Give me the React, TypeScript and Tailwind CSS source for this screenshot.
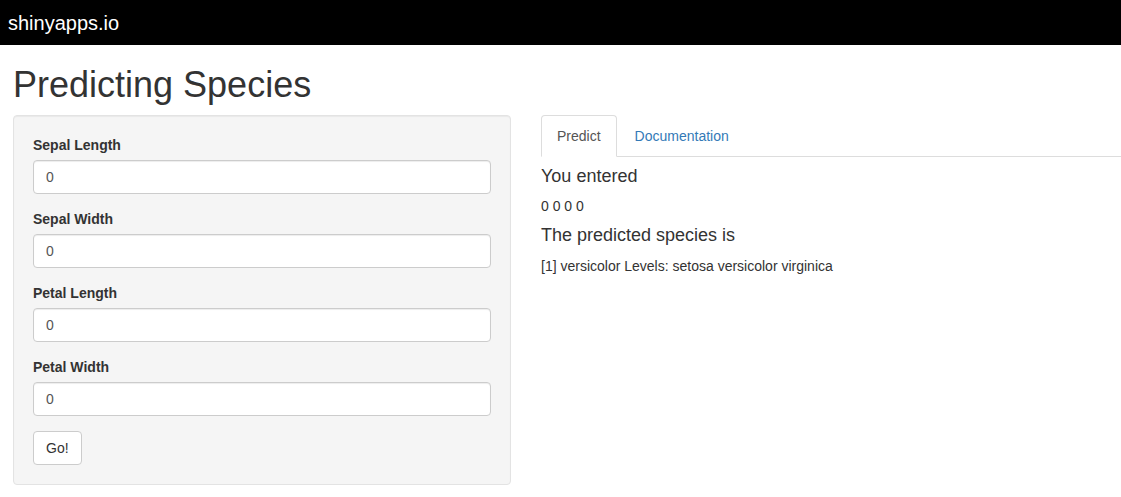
import React from "react";

const fields = ["Sepal Length", "Sepal Width", "Petal Length", "Petal Width"];

const Field = ({ label }: { label: string }) => (
    <div className="mb-[15px]">
        <label className="block mb-[5px] font-bold leading-[20px]">{label}</label>
        <input
            type="number"
            defaultValue={0}
            className="block w-full h-[34px] px-3 py-[6px] border border-[#ccc] rounded bg-white text-[#555] text-[14px] leading-[20px] shadow-[inset_0_1px_1px_rgba(0,0,0,0.075)] outline-none [appearance:textfield] [&::-webkit-inner-spin-button]:appearance-none"
        />
    </div>
);

const App = () => {
    const [tab, setTab] = React.useState("predict");
    return (
        <div className="min-h-[497px] bg-white text-[#333] text-[14px] leading-[20px] font-['Liberation_Sans',Arial,sans-serif]">
            <div className="h-[45px] bg-black flex items-center pl-2 text-white text-[20px] leading-normal">
                shinyapps.io
            </div>

            <h1 className="mt-5 mb-[10px] pl-[13px] text-[36px] leading-[1.1] font-medium">Predicting Species</h1>

            <div className="flex">
                <div className="ml-[13px] w-[498px] shrink-0 p-[19px] bg-[#f5f5f5] border border-[#e3e3e3] rounded shadow-[inset_0_1px_1px_rgba(0,0,0,0.05)]">
                    {fields.map((f) => (
                        <Field key={f} label={f} />
                    ))}
                    <button className="h-[34px] px-3 py-[6px] bg-white border border-[#ccc] rounded text-[#333] leading-[20px]">
                        Go!
                    </button>
                </div>

                <div className="flex-1 min-w-0 ml-[30px]">
                    <ul className="flex border-b border-[#ddd]">
                        <li className="-mb-px mr-[2px]">
                            <button
                                onClick={() => setTab("predict")}
                                className={
                                    tab === "predict"
                                        ? "block px-[15px] py-[10px] leading-[20px] border border-[#ddd] border-b-transparent rounded-t bg-white text-[#555]"
                                        : "block px-[15px] py-[10px] leading-[20px] border border-transparent rounded-t text-[#337ab7]"
                                }
                            >
                                Predict
                            </button>
                        </li>
                        <li className="-mb-px mr-[2px]">
                            <button
                                onClick={() => setTab("docs")}
                                className={
                                    tab === "docs"
                                        ? "block px-[15px] py-[10px] leading-[20px] border border-[#ddd] border-b-transparent rounded-t bg-white text-[#555]"
                                        : "block px-[15px] py-[10px] leading-[20px] border border-transparent rounded-t text-[#337ab7]"
                                }
                            >
                                Documentation
                            </button>
                        </li>
                    </ul>
                    {tab === "predict" ? (
                        <div>
                            <h4 className="my-[10px] text-[18px] leading-[1.1] font-medium">You entered</h4>
                            <div>0 0 0 0</div>
                            <h4 className="my-[10px] text-[18px] leading-[1.1] font-medium">The predicted species is</h4>
                            <div>[1] versicolor Levels: setosa versicolor virginica</div>
                        </div>
                    ) : (
                        <div className="pt-[10px]">Enter the sepal and petal measurements, then press Go!</div>
                    )}
                </div>
            </div>
        </div>
    );
};

export default App;
